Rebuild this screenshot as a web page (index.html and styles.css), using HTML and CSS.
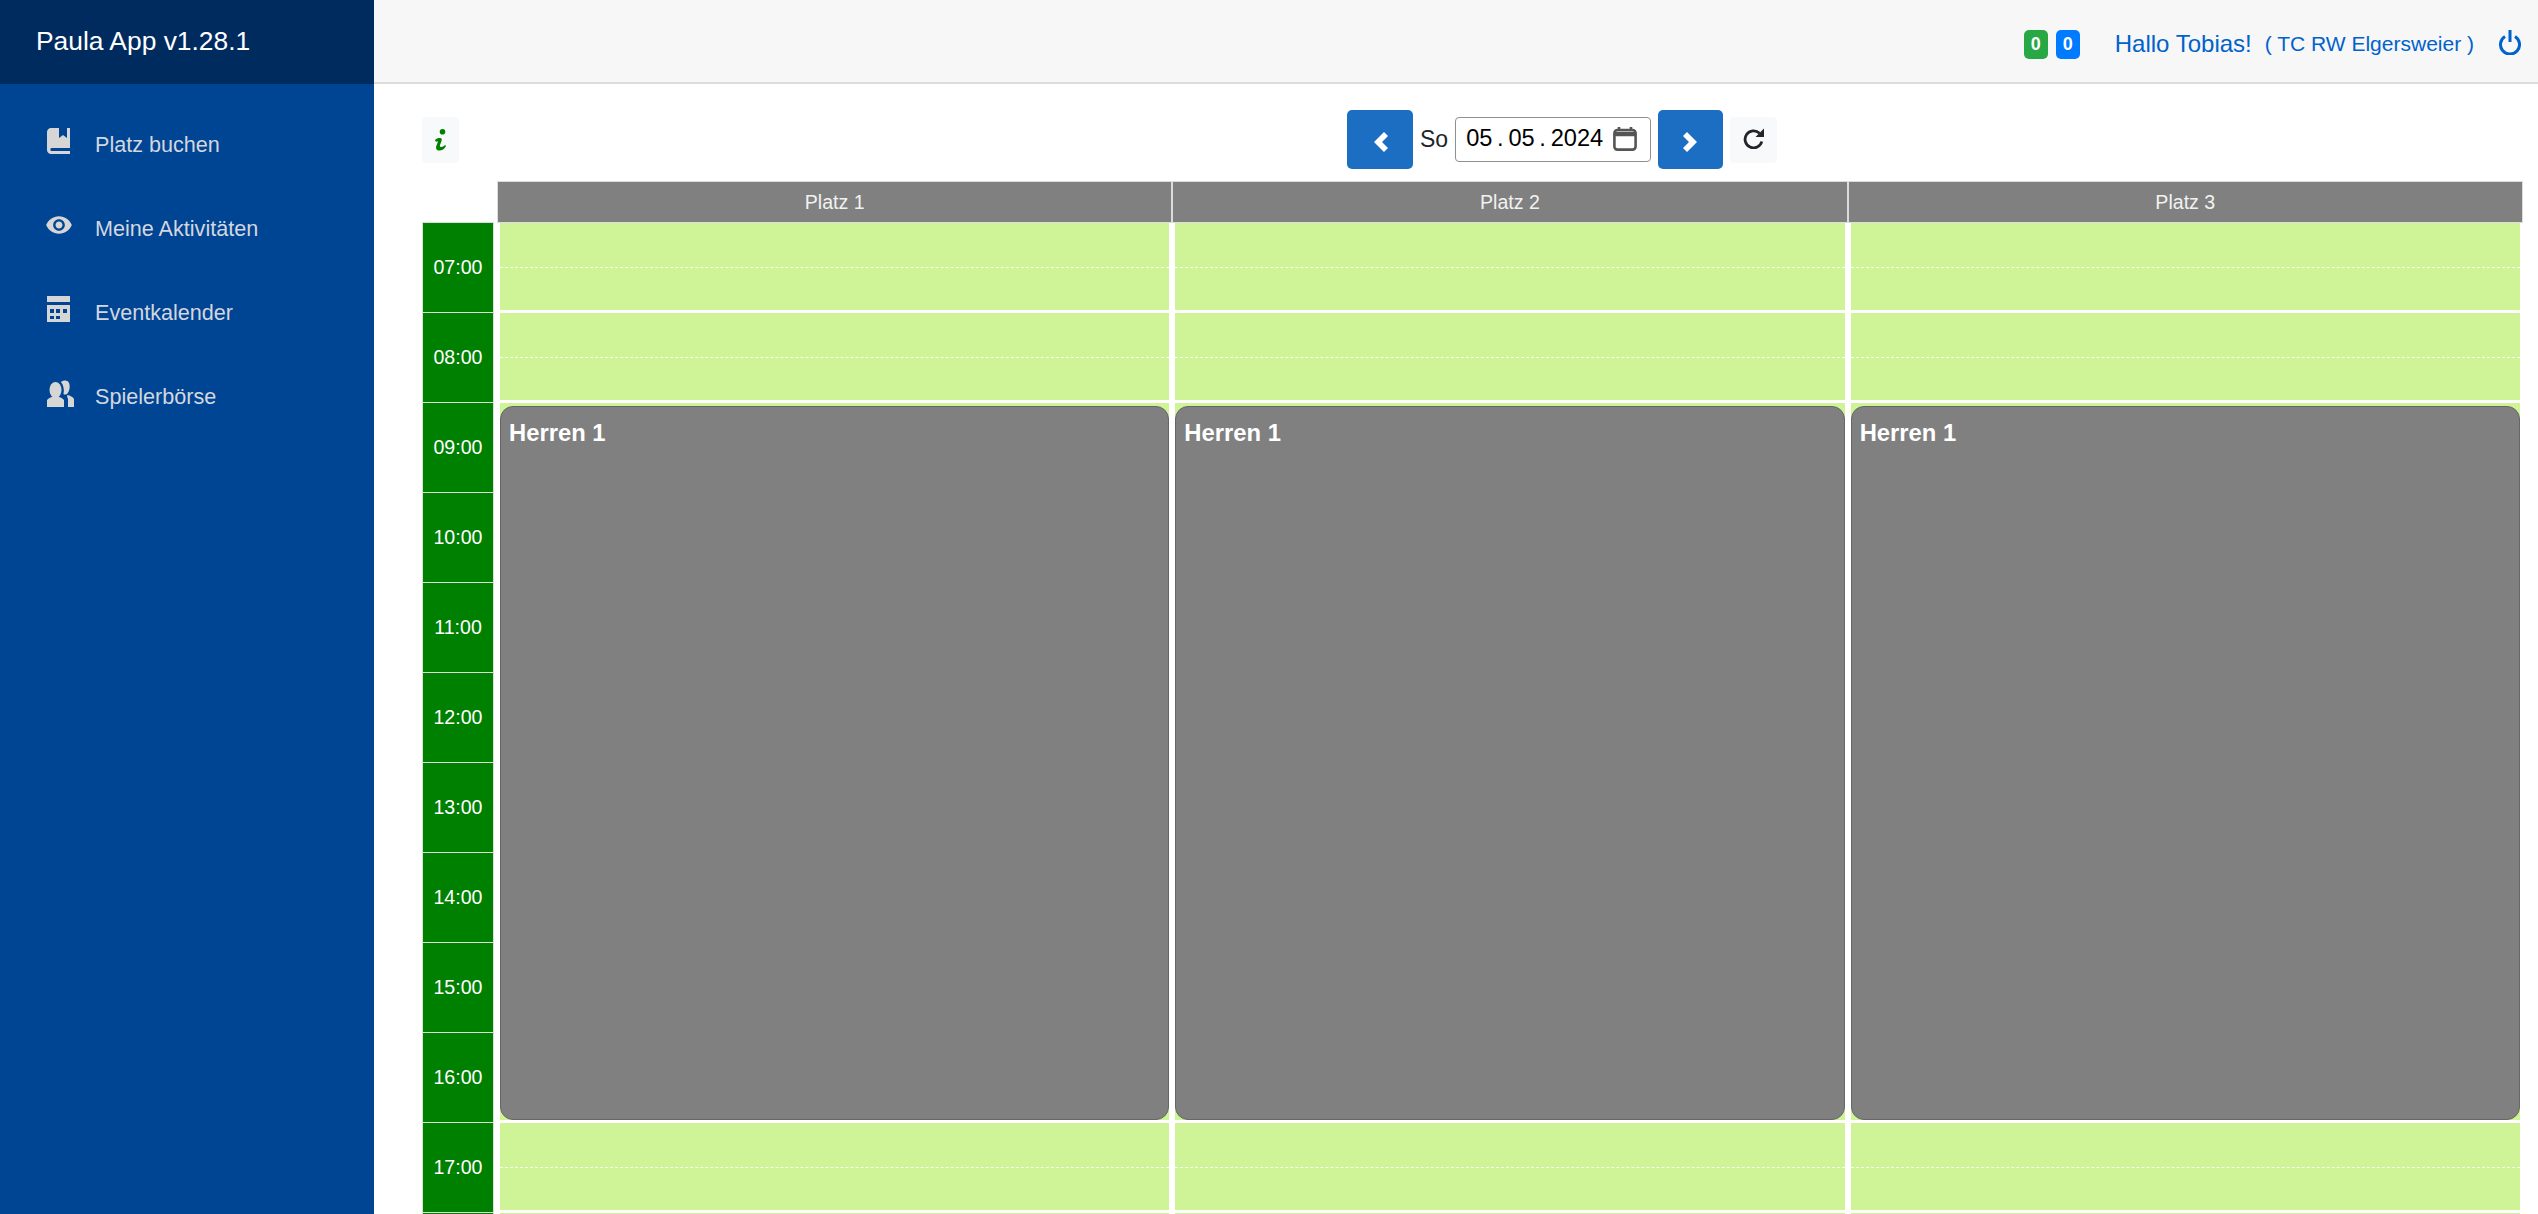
FILE: index.html
```html
<!DOCTYPE html>
<html lang="de">
<head>
<meta charset="utf-8">
<title>Paula App</title>
<link rel="stylesheet" href="styles.css">
</head>
<body>
<div class="app">
  <aside class="sidebar">
    <div class="brand">Paula App v1.28.1</div>
    <nav class="nav">
      <a class="nav-item"><span class="nav-icon"><svg width="23" height="26" viewBox="0 0 23 26"><path d="M4 0H12V10L16 7L20 10V0H23V20H4.500C3 20 3 23 4.500 23H23V26H4C1.800 26 0 24.200 0 22V4C0 1.800 1.800 0 4 0Z"/></svg></span>Platz buchen</a>
      <a class="nav-item"><span class="nav-icon"><svg class="eye" width="28" height="28" viewBox="0 0 24 24"><path d="M12 4.500C7 4.500 2.730 7.610 1 12c1.730 4.390 6 7.500 11 7.500s9.270-3.110 11-7.500c-1.730-4.390-6-7.500-11-7.500zM12 17c-2.760 0-5-2.240-5-5s2.240-5 5-5 5 2.240 5 5-2.240 5-5 5zm0-8c-1.660 0-3 1.340-3 3s1.340 3 3 3 3-1.340 3-3-1.340-3-3-3z"/></svg></span>Meine Aktivitäten</a>
      <a class="nav-item"><span class="nav-icon"><svg width="23" height="26" viewBox="0 0 23 26"><path fill-rule="evenodd" d="M0 0H23V6H0ZM0 9H23V26H0ZM3 13V17H7V13ZM9 13V17H13V13ZM16 13V17H20V13ZM3 20V23H7V20ZM9 20V23H13V20Z"/></svg></span>Eventkalender</a>
      <a class="nav-item"><span class="nav-icon"><svg width="27" height="27" viewBox="0 0 27 27"><ellipse cx="8.500" cy="10" rx="6" ry="8"/><path d="M0 27V20C2 17.500 5 17 6 16.500H11C12 17 15 17.500 17 20V27Z"/><path d="M14 2C16 0 20 0 21.500 2C23.500 5 23 11 20 14C18 15 17 14.500 16.500 14C17.500 10 16.500 5 14 2Z"/><path d="M21 27V19C20 17 20 15.500 20.500 15C23 15.500 26 17 27 19V27Z"/></svg></span>Spielerbörse</a>
    </nav>
  </aside>
  <div class="main">
    <header class="topbar">
      <span class="badge badge-green">0</span>
      <span class="badge badge-blue">0</span>
      <span class="hello">Hallo Tobias!</span>
      <span class="club">( TC RW Elgersweier )</span>
      <svg class="power" width="22" height="25" viewBox="0 0 22 25"><path d="M6 6.500A9.500 9.500 0 1 0 16 6.500M11 0V12"/></svg>
    </header>
    <div class="content">
      <div class="toolbar">
        <button class="info-btn"><svg width="14" height="22" viewBox="0 0 14 22"><circle cx="8.500" cy="2.800" r="2.800"/><path d="M1 11C2.500 9.500 4 9 6 9C8 9 8 10.500 7.500 12L6 16C5.700 17 6 18 7 18C8.500 18 10 17 11 16L12 17C10.500 20 8 21.500 5.500 21.500C2.500 21.500 1.500 19.500 2.300 17L3.800 13C4 12.300 3.500 12 3 12.200L2 13Z"/></svg></button>
        <div class="date-group">
          <button class="nav-btn"><svg width="15" height="20" viewBox="0 0 15 20"><path d="M11 0L15 4L9 10L15 16L11 20L1 10Z"/></svg></button>
          <span class="weekday">So</span>
          <div class="date-input">
            <span class="date-text">05</span><span class="date-sep">.</span><span class="date-text">05</span><span class="date-sep">.</span><span class="date-text">2024</span>
            <svg class="cal-icon" width="24" height="24" viewBox="0 0 24 24"><path d="M6 0V4M18 0V4"/><rect x="1.400" y="3" width="21.200" height="19.600" rx="3"/><path d="M1 7H23" stroke-width="4.500"/></svg>
          </div>
          <button class="nav-btn nav-btn-next"><svg width="15" height="20" viewBox="0 0 15 20"><path d="M4 0L0 4L6 10L0 16L4 20L14 10Z"/></svg></button>
          <button class="refresh-btn"><svg width="22" height="22" viewBox="0 0 22 22"><path class="refresh-arc" d="M16.500 6.200A8.500 8.500 0 1 0 18.800 14.500"/><path d="M21 1.500V10H12.500Z"/></svg></button>
        </div>
      </div>
      <div class="scheduler">
        <div class="head-row">
          <div class="head-blank"></div>
          <div class="head-cell">Platz 1</div>
          <div class="head-cell">Platz 2</div>
          <div class="head-cell">Platz 3</div>
        </div>
        <div class="body-row">
          <div class="time-col">
            <div class="time">07:00</div><div class="time">08:00</div><div class="time">09:00</div><div class="time">10:00</div><div class="time">11:00</div><div class="time">12:00</div><div class="time">13:00</div><div class="time">14:00</div><div class="time">15:00</div><div class="time">16:00</div><div class="time">17:00</div><div class="time"></div>
          </div>
          <div class="court">
            <div class="slot"><div class="half"></div></div><div class="slot"><div class="half"></div></div><div class="slot"></div><div class="slot"></div><div class="slot"></div><div class="slot"></div><div class="slot"></div><div class="slot"></div><div class="slot"></div><div class="slot"></div><div class="slot"><div class="half"></div></div><div class="slot"><div class="half"></div></div>
            <div class="event">Herren 1</div>
          </div>
          <div class="court">
            <div class="slot"><div class="half"></div></div><div class="slot"><div class="half"></div></div><div class="slot"></div><div class="slot"></div><div class="slot"></div><div class="slot"></div><div class="slot"></div><div class="slot"></div><div class="slot"></div><div class="slot"></div><div class="slot"><div class="half"></div></div><div class="slot"><div class="half"></div></div>
            <div class="event">Herren 1</div>
          </div>
          <div class="court">
            <div class="slot"><div class="half"></div></div><div class="slot"><div class="half"></div></div><div class="slot"></div><div class="slot"></div><div class="slot"></div><div class="slot"></div><div class="slot"></div><div class="slot"></div><div class="slot"></div><div class="slot"></div><div class="slot"><div class="half"></div></div><div class="slot"><div class="half"></div></div>
            <div class="event">Herren 1</div>
          </div>
        </div>
      </div>
    </div>
  </div>
</div>
</body>
</html>
```
FILE: styles.css
```css
* { box-sizing: border-box; }
html, body { margin: 0; height: 100%; overflow: hidden; }
body { font-family: "Liberation Sans", Arial, sans-serif; color: #212529; background: #fff; }

.app { display: flex; height: 100vh; }

.sidebar { width: 374px; flex: none; background: #004494; }
.brand { height: 84px; padding-left: 36px; display: flex; align-items: center; background: #002b5f; color: #fff; font-size: 26.400px; padding-bottom: 2px; }
.nav { padding-top: 19px; }
.nav-item { height: 84px; display: flex; align-items: center; color: #d3d7df; font-size: 21.600px; }
.nav-icon { width: 95px; flex: none; padding-left: 47px; display: flex; align-items: center; height: 100%; padding-bottom: 8px; }
.nav-icon svg { fill: #d6d6d6; display: block; }
.nav-icon .eye { margin-left: -2px; }

.main { flex: 1; min-width: 0; display: flex; flex-direction: column; }
.topbar { height: 84px; flex: none; display: flex; align-items: center; justify-content: flex-end; padding: 6px 17px 0 0; background: #f7f7f7; border-bottom: 2px solid #dcdcdc; color: #0062cc; }
.badge { width: 24px; height: 29px; border-radius: 5px; display: flex; align-items: center; justify-content: center; color: #fff; font-size: 18px; font-weight: bold; }
.badge-green { background: #28a745; }
.badge-blue { background: #007bff; margin-left: 8px; }
.hello { margin-left: 35px; font-size: 24px; }
.club { margin-left: 13px; font-size: 21px; }
.power { margin: -3px 0 0 25px; fill: none; stroke: #0062cc; stroke-width: 3; }

.content { flex: 1; min-height: 0; padding: 0 15px 0 48px; overflow: hidden; }
.toolbar { height: 97px; display: flex; align-items: center; padding-top: 14px; }
.info-btn { width: 37px; height: 46px; flex: none; border: 0; border-radius: 4px; background: #f8f9fa; padding: 0; display: flex; align-items: center; justify-content: center; }
.info-btn svg { fill: #008000; }
.date-group { margin-left: 888px; display: flex; align-items: center; gap: 7px; }
.nav-btn { width: 66px; height: 59px; border: 0; border-radius: 5px; background: #1b6ec2; padding: 4px 0 0; display: flex; align-items: center; justify-content: center; }
.nav-btn svg { fill: #fff; }
.nav-btn-next { width: 65px; }
.weekday { font-size: 23px; }
.date-input { width: 196px; height: 45px; display: flex; align-items: center; padding: 0 0 2px 10px; border: 1px solid #8f8f8f; border-radius: 4px; color: #000; font-size: 23.600px; }
.date-sep { width: 16px; text-align: center; }
.cal-icon { margin-left: 10px; fill: none; stroke: #555; stroke-width: 2.600; }
.refresh-btn { width: 47px; height: 46px; border: 0; border-radius: 4px; background: #f8f9fa; padding: 0 0 4px; display: flex; align-items: center; justify-content: center; }
.refresh-btn svg { fill: #212529; }
.refresh-btn .refresh-arc { fill: none; stroke: #212529; stroke-width: 2.800; }

.head-row { display: grid; grid-template-columns: 75px repeat(3, 1fr); height: 42px; }
.head-blank { border-bottom: 1px solid #ddd; margin-right: 3px; margin-top: 41px; }
.head-cell { background: #808080; border: 1px solid #dcdcdc; color: #f2f2f2; font-size: 19.600px; display: flex; align-items: center; justify-content: center; }

.body-row { display: grid; grid-template-columns: 75px repeat(3, 1fr); }
.time-col { margin-right: 3px; }
.time { height: 90px; background: #008000; border: 1px solid #ddd; border-width: 0 1px 1px; color: #fff; font-size: 19.600px; display: flex; align-items: center; justify-content: center; }

.court { position: relative; padding: 0 3px; }
.slot { height: 90px; background: #cff397; border-bottom: 3px solid #fff; }
.half { height: 45px; border-bottom: 1px dashed rgba(255, 255, 255, .85); }
.event { position: absolute; left: 3px; right: 3px; top: 183px; height: 714px; padding: 12px 8px; background: #808080; border: 1px solid #666; border-radius: 13px; color: #fff; font-size: 23.800px; font-weight: bold; }
```
